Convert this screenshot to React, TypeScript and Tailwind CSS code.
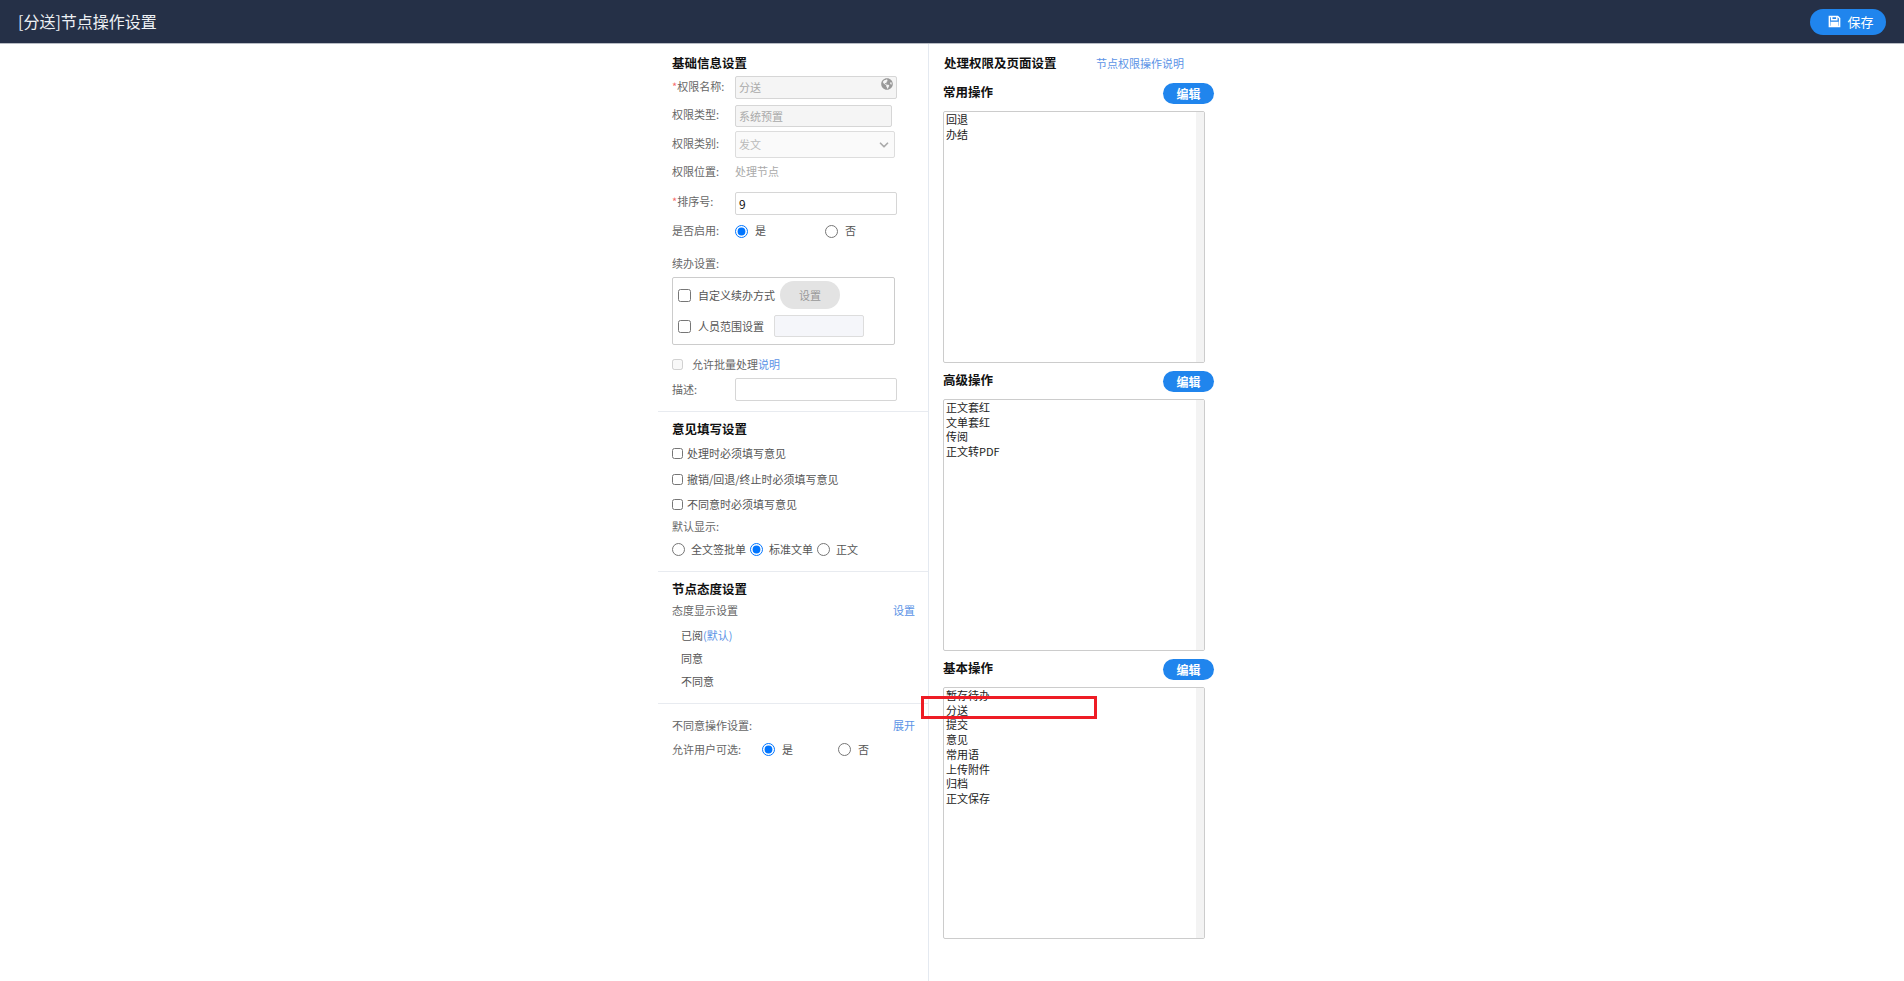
import React from 'react';
import { ChevronDown } from 'lucide-react';
import { FaGlobeAmericas } from 'react-icons/fa';

const Label = ({ children, required, className }: { children: React.ReactNode; required?: boolean; className?: string }) => (
  <span className={`w-[63px] shrink-0 text-[#666] ${className ?? 'pb-[2px]'}`}>
    {required && <span className="text-[#f56c6c]">*</span>}
    {children}
  </span>
);

const SectionTitle = ({ children }: { children: React.ReactNode }) => (
  <h2 className="text-[12.5px] leading-5 font-bold text-[#111]">{children}</h2>
);

const Divider = () => <div className="-mx-[14px] h-px bg-[#e8ebf0]" />;

const Radio = ({ name, checked, label, className }: { name: string; checked?: boolean; label: string; className?: string }) => (
  <label className={`flex items-center ${className ?? ''}`}>
    <input type="radio" name={name} defaultChecked={checked} className="m-0 h-[13px] w-[13px]" />
    <span className="ml-[7px] text-[#555]">{label}</span>
  </label>
);

const Check = ({ label }: { label: string }) => (
  <label className="flex items-center text-[#555]">
    <input type="checkbox" className="m-0 h-[11px] w-[11px]" />
    <span className="ml-[4px]">{label}</span>
  </label>
);

const OpPanel = ({ title, items, titleClass }: { title: string; items: string[]; titleClass: string }) => (
  <div>
    <div className={`flex h-[21px] items-center justify-between ${titleClass}`}>
      <span className="pb-[5px] text-[12.5px] font-bold text-[#111]">{title}</span>
      <button className="h-[21px] w-[51px] rounded-full bg-[#2085ed] text-[12px] font-bold text-white">编辑</button>
    </div>
    <div className="relative mt-[7px] h-[252px] w-[262px] overflow-hidden rounded-[2px] border border-[#ccc] bg-white pl-[2px] leading-[14.7px] text-[#222]">
      {items.map((item) => (
        <div key={item}>{item}</div>
      ))}
      <div className="absolute top-0 right-0 bottom-0 w-[8px] bg-[#f3f3f3]" />
    </div>
  </div>
);

export default function App() {
  return (
    <div
      className="min-h-screen bg-white text-[11px] leading-[15px]"
      style={{ fontFamily: '"Noto Sans CJK SC", "Liberation Sans", sans-serif' }}
    >
      {/* Header */}
      <header className="flex h-[44px] items-center justify-between border-b border-[#b8bcc4] bg-[#253047] px-[18px]">
        <h1 className="text-[16px] font-normal text-[#eef1f5]">[分送]节点操作设置</h1>
        <button className="flex h-[26px] w-[76px] items-center justify-center gap-[6px] rounded-full bg-[#2085ed] pl-[6px] text-[13px] text-white">
          <svg viewBox="0 0 14 14" className="h-[13px] w-[13px]" fill="none" stroke="currentColor" strokeWidth="1.6">
            <path d="M1.5 1.5h9l2 2v9h-11z" />
            <path d="M4 1.5v3.5h5.5v-3.5" />
            <path d="M3.5 12.5v-4.5h7v4.5" fill="currentColor" />
          </svg>
          保存
        </button>
      </header>

      <main className="mx-auto flex h-[937px] w-[588px]">
        {/* Left column */}
        <section className="w-[271px] shrink-0 border-r border-[#e4e9f0] px-[14px] pt-[9px]">
          <SectionTitle>基础信息设置</SectionTitle>

          <div className="mt-[3px] flex items-center">
            <Label required>权限名称:</Label>
            <div className="relative flex h-[23px] w-[162px] items-center rounded-[2px] border border-[#d6d6d6] bg-[#f5f5f5] pl-[3px] text-[#aaa]">
              分送
              <FaGlobeAmericas className="absolute top-[1px] right-[3px] h-[12px] w-[12px] text-[#999]" />
            </div>
          </div>
          <div className="mt-[6px] flex items-center">
            <Label className="pb-[3px]">权限类型:</Label>
            <div className="flex h-[22px] w-[157px] items-center rounded-[2px] border border-[#d6d6d6] bg-[#f5f5f5] pl-[3px] text-[#aaa]">
              系统预置
            </div>
          </div>
          <div className="mt-[4px] flex items-center">
            <Label>权限类别:</Label>
            <div className="flex h-[27px] w-[160px] items-center justify-between rounded-[2px] border border-[#ddd] bg-[#fafafa] pr-[3px] pl-[3px] text-[#bbb]">
              发文
              <ChevronDown className="h-[14px] w-[14px] text-[#aaa]" strokeWidth={3} />
            </div>
          </div>
          <div className="mt-[6px] flex items-center">
            <Label>权限位置:</Label>
            <span className="pb-[2px] text-[#aaa]">处理节点</span>
          </div>
          <div className="mt-[11px] flex items-center">
            <Label required className="pb-[4px]">排序号:</Label>
            <div className="flex h-[23px] w-[162px] items-center rounded-[2px] border border-[#d6d6d6] bg-white pl-[3px] text-[12px] text-[#111]">
              9
            </div>
          </div>
          <div className="mt-[8px] flex items-center">
            <Label>是否启用:</Label>
            <Radio name="enabled" checked label="是" className="w-[90px] [&>span]:mb-[2px]" />
            <Radio name="enabled" label="否" className="[&>span]:mb-[2px]" />
          </div>

          <div className="mt-[16px] text-[#666]">续办设置:</div>
          <div className="mt-[6px] h-[68px] w-[223px] rounded-[2px] border border-[#ccc] pt-[3px] pl-[5px]">
            <div className="flex h-[28px] items-center text-[#555]">
              <input type="checkbox" className="m-0 h-[13px] w-[13px]" />
              <span className="ml-[7px]">自定义续办方式</span>
              <button className="ml-[5px] h-[28px] w-[60px] rounded-full bg-[#e3e3e3] text-[#999]">设置</button>
            </div>
            <div className="mt-[3px] flex h-[28px] items-center text-[#555]">
              <input type="checkbox" className="m-0 h-[13px] w-[13px]" />
              <span className="ml-[7px]">人员范围设置</span>
              <div className="ml-[10px] h-[22px] w-[90px] rounded-[2px] border border-[#ddd] bg-[#f5f6fa]" />
            </div>
          </div>

          <div className="mt-[12px] flex items-center">
            <input type="checkbox" disabled className="m-0 h-[11px] w-[11px]" />
            <span className="ml-[9px] text-[#666]">
              允许批量处理<span className="text-[#5b93e6]">说明</span>
            </span>
          </div>
          <div className="mt-[6px] flex items-center">
            <Label className="pb-0">描述:</Label>
            <div className="h-[23px] w-[162px] rounded-[2px] border border-[#d6d6d6] bg-white" />
          </div>

          <div className="mt-[10px]">
            <Divider />
          </div>
          <div className="mt-[7px]">
            <SectionTitle>意见填写设置</SectionTitle>
          </div>
          <div className="mt-[7px]">
            <Check label="处理时必须填写意见" />
          </div>
          <div className="mt-[11px]">
            <Check label="撤销/回退/终止时必须填写意见" />
          </div>
          <div className="mt-[10px]">
            <Check label="不同意时必须填写意见" />
          </div>
          <div className="mt-[7px] text-[#666]">默认显示:</div>
          <div className="mt-[8px] flex items-center">
            <Radio name="display" label="全文签批单" className="mr-[4px] [&>span]:ml-[6px]" />
            <Radio name="display" checked label="标准文单" className="mr-[4px] [&>span]:ml-[6px]" />
            <Radio name="display" label="正文" className="[&>span]:ml-[6px]" />
          </div>

          <div className="mt-[14px]">
            <Divider />
          </div>
          <div className="mt-[7px]">
            <SectionTitle>节点态度设置</SectionTitle>
          </div>
          <div className="mt-[4px] -mr-[1px] flex justify-between text-[#666]">
            <span>态度显示设置</span>
            <span className="text-[#5b93e6]">设置</span>
          </div>
          <div className="mt-[10px] pl-[9px] text-[#555]">
            已阅<span className="text-[#5b93e6]">(默认)</span>
          </div>
          <div className="mt-[8px] pl-[9px] text-[#555]">同意</div>
          <div className="mt-[8px] pl-[9px] text-[#555]">不同意</div>

          <div className="mt-[14px]">
            <Divider />
          </div>
          <div className="mt-[14px] -mr-[1px] flex justify-between text-[#666]">
            <span>不同意操作设置:</span>
            <span className="text-[#5b93e6]">展开</span>
          </div>
          <div className="mt-[9px] flex items-center text-[#666]">
            <span className="w-[90px] shrink-0">允许用户可选:</span>
            <Radio name="optional" checked label="是" className="w-[76px]" />
            <Radio name="optional" label="否" />
          </div>
        </section>

        {/* Right column */}
        <section className="relative flex-1 pt-[9px] pl-[14px]">
          <div className="flex items-center">
            <h2 className="w-[153px] pl-[1px] text-[12.5px] leading-5 font-bold text-[#111]">处理权限及页面设置</h2>
            <a className="text-[#5b93e6]">节点权限操作说明</a>
          </div>
          <div className="w-[271px]">
            <OpPanel title="常用操作" items={['回退', '办结']} titleClass="mt-[10px]" />
            <OpPanel title="高级操作" items={['正文套红', '文单套红', '传阅', '正文转PDF']} titleClass="mt-[8px]" />
            <OpPanel
              title="基本操作"
              items={['暂存待办', '分送', '提交', '意见', '常用语', '上传附件', '归档', '正文保存']}
              titleClass="mt-[8px]"
            />
          </div>
          {/* red annotation box */}
          <div className="absolute top-[652px] left-[-8px] h-[23px] w-[176px] border-[3px] border-[#ee1c25]" />
        </section>
      </main>
    </div>
  );
}
